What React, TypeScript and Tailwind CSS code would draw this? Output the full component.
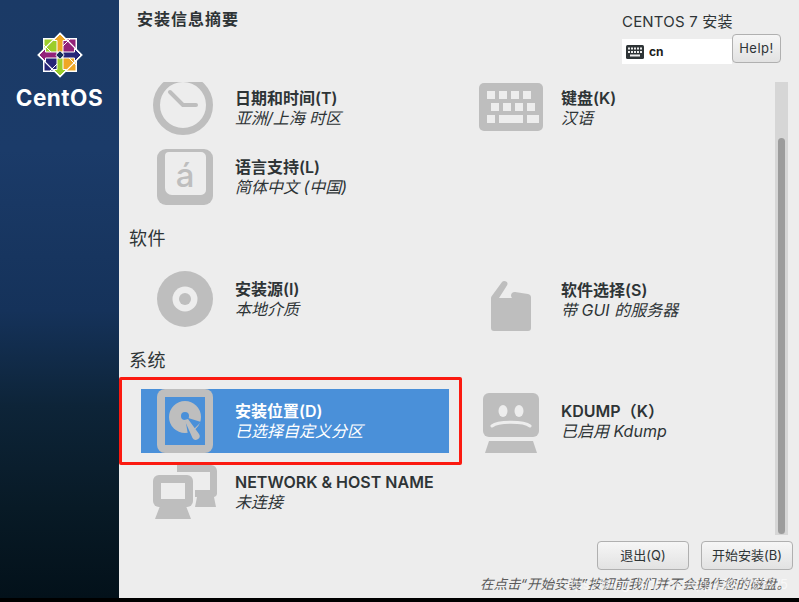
import React from "react";

const G = "#bebebe";

function Logo() {
  return (
    <svg width="46" height="46" viewBox="0 0 46 46">
      <rect x="6" y="6" width="34" height="34" fill="#fff" />
      <rect x="7.500" y="7.500" width="13" height="13" fill="#9ccd2a" />
      <rect x="25.500" y="7.500" width="13" height="13" fill="#932279" />
      <rect x="25.500" y="25.500" width="13" height="13" fill="#efa724" />
      <rect x="7.500" y="25.500" width="13" height="13" fill="#262577" />
      <path d="M23 1L45 23 23 45 1 23z" fill="none" stroke="#fff" strokeWidth="1.200" />
      <path d="M7 13l13 13M33 7L20 20M39 33L26 20M13 39l13-13" stroke="#fff" strokeWidth="1" fill="none" />
      <g stroke="#fff" strokeWidth="1">
        <path d="M23 2l6.500 6.500H26V20h-6V8.500h-3.500z" fill="#efa724" />
        <path d="M44 23l-6.500 6.500V26H26v-6h11.500v-3.500z" fill="#262577" />
        <path d="M23 44l-6.500-6.500H20V26h6v11.500h3.500z" fill="#9ccd2a" />
        <path d="M2 23l6.500-6.500V20H20v6H8.500v3.500z" fill="#932279" />
      </g>
      <rect x="20" y="20" width="6" height="6" transform="rotate(45 23 23)" fill="#16305a" stroke="#fff" strokeWidth="0.800" />
    </svg>
  );
}

function Clock() {
  return (
    <svg width="60" height="60" viewBox="0 0 60 60">
      <circle cx="30" cy="30" r="26.500" fill="none" stroke={G} strokeWidth="7" />
      <path d="M17 17l13 13h13" fill="none" stroke={G} strokeWidth="4" strokeLinecap="round" strokeLinejoin="round" />
    </svg>
  );
}

function Keyboard() {
  const keys = [
    [8, 8, 8], [20, 8, 8], [32, 8, 8], [44, 8, 8],
    [12, 20, 8], [24, 20, 8], [36, 20, 8], [48, 20, 8],
    [8, 32, 8], [20, 32, 24], [48, 32, 12],
  ];
  return (
    <svg width="64" height="48" viewBox="0 0 64 48">
      <rect width="64" height="48" rx="5" fill={G} />
      {keys.map(([x, y, w]) => (
        <rect key={`${x}-${y}`} x={x} y={y} width={w} height="8" fill="#ededed" />
      ))}
    </svg>
  );
}

function Lang() {
  return (
    <svg width="56" height="56" viewBox="0 0 56 56">
      <rect width="56" height="56" rx="9" fill={G} />
      <path d="M12 3h32a5 5 0 0 1 5 5v33a5 5 0 0 1-5 5H15a7 7 0 0 1-7-7V7a4 4 0 0 1 4-4z" fill="#ededed" />
      <text x="28" y="38" textAnchor="middle" fontSize="33" fontWeight="500" fontFamily="Inter" fill={G}>á</text>
    </svg>
  );
}

function Disc() {
  return (
    <svg width="56" height="56" viewBox="0 0 56 56">
      <circle cx="28" cy="28" r="28" fill={G} />
      <circle cx="28" cy="28" r="12.500" fill="#ededed" />
      <circle cx="28" cy="28" r="6" fill={G} />
    </svg>
  );
}

function Box() {
  return (
    <svg width="40" height="52" viewBox="0 0 40 52">
      <path d="M0 19a3 3 0 0 1 .8-2L11 3c1.500-2 6-.8 5.500 2 0 1-1 2-1.500 3L8 19h13c-2-2-1-6 3-6l13 2c2 .4 3 1.500 3 3.500V49a3 3 0 0 1-3 3H3a3 3 0 0 1-3-3z" fill={G} />
    </svg>
  );
}

function Hdd() {
  const inner = "#4a90d9";
  return (
    <svg width="56" height="64" viewBox="0 0 56 64">
      <rect width="56" height="64" rx="8" fill={G} />
      <rect x="8" y="8" width="40" height="48" fill={inner} />
      <circle cx="28" cy="28" r="16" fill={G} />
      <path d="M28 28L44 33L31 46z" fill={inner} />
      <circle cx="28" cy="27" r="4" fill={inner} />
      <path d="M27.500 31l3.500-1 11 15a3.500 3.500 0 0 1-6.500 4z" fill={G} />
    </svg>
  );
}

function Net() {
  return (
    <svg width="64" height="54" viewBox="0 0 64 54">
      <path d="M24 0h34a6 6 0 0 1 6 6v22a4 4 0 0 1-3 4l2 10H42l2-10h-2v-7h15V7H24z" fill={G} />
      <rect x="0" y="10" width="40" height="32" rx="6" fill={G} />
      <rect x="8" y="18" width="24" height="16" fill="#ededed" />
      <path d="M7 41h26l5 13H2z" fill={G} />
    </svg>
  );
}

function Dump() {
  return (
    <svg width="56" height="60" viewBox="0 0 56 60">
      <rect width="56" height="44" rx="6" fill={G} />
      <ellipse cx="20" cy="18" rx="4.500" ry="6" fill="#ededed" />
      <ellipse cx="36" cy="18" rx="4.500" ry="6" fill="#ededed" />
      <path d="M9 33c6-5 32-5 38 0" fill="none" stroke="#ededed" strokeWidth="3" strokeLinecap="round" />
      <path d="M6 48h44l4 12H2z" fill={G} />
    </svg>
  );
}

function Spoke({
  icon,
  title,
  sub,
  sel,
  left,
  height,
  textClass = "",
}: {
  icon: React.ReactNode;
  title: string;
  sub: string;
  sel?: boolean;
  left: string;
  height: string;
  textClass?: string;
}) {
  return (
    <div className={`flex items-center ${height} ${sel ? "bg-[#4a90d9] text-white" : "text-[#2e3436]"}`}>
      <div className={`flex justify-center items-center shrink-0 ${left}`}>{icon}</div>
      <div className={`flex flex-col ${textClass}`}>
        <div className="text-[16px] leading-[20px] font-semibold whitespace-nowrap">{title}</div>
        <div className="text-[16px] leading-[20px] italic whitespace-nowrap">{sub}</div>
      </div>
    </div>
  );
}

export default function App() {
  return (
    <div
      className="relative w-[799px] h-[602px] flex flex-col overflow-hidden bg-black"
      style={{ fontFamily: "Inter, 'Noto Sans CJK SC', sans-serif" }}
    >
      <div className="flex h-[598px]">
        <aside className="w-[119px] shrink-0 flex flex-col items-center pt-[32px] bg-[linear-gradient(180deg,#1b3a66_0%,#1b3b69_25%,#15325a_52%,#0d2438_68%,#081a26_85%,#03111a_100%)]">
          <Logo />
          <div className="mt-[7px] text-white text-[22.500px] leading-[26px] font-bold tracking-[0.5px]">CentOS</div>
        </aside>

        <main className="flex-1 flex flex-col bg-[#ededed]">
          <header className="h-[82px] shrink-0 flex justify-between pl-[18px] pr-[18px]">
            <h1 className="pt-[9px] text-[16px] leading-[20px] font-semibold text-[#2e3436] tracking-[1px]">安装信息摘要</h1>
            <div className="flex flex-col w-[159px] pt-[12px]">
              <div className="text-[15px] leading-[20px] tracking-[0.2px] text-[#2e3436] whitespace-nowrap">CENTOS 7 安装</div>
              <div className="flex items-start">
                <div className="mt-[7px] w-[110px] h-[25px] bg-white flex items-center gap-[5px] pl-[4px]">
                  <svg width="18" height="14" viewBox="0 0 18 14">
                    <rect width="18" height="14" rx="1.500" fill="#2e3436" />
                    {[0, 1, 2, 3, 4].map((i) => (
                      <rect key={i} x={2 + i * 3} y="2.500" width="2" height="2" fill="#ededed" />
                    ))}
                    {[0, 1, 2, 3, 4].map((i) => (
                      <rect key={i} x={2 + i * 3} y="6" width="2" height="2" fill="#ededed" />
                    ))}
                    <rect x="4" y="9.500" width="10" height="2" fill="#ededed" />
                  </svg>
                  <span className="text-[12px] font-bold text-[#1c1c1c]">cn</span>
                </div>
                <button className="mt-[2px] w-[49px] h-[29px] rounded-[4px] border border-[#b0b0b0] bg-[linear-gradient(180deg,#f6f6f6,#e2e2e2)] text-[13px] text-[#2e3436] tracking-[0.5px]">
                  Help!
                </button>
              </div>
            </div>
          </header>

          <div className="flex h-[453px] pl-[10px] pr-[11px]">
            <div className="flex-1 overflow-hidden">
              <div className="-mt-[7px] grid grid-cols-[320px_1fr]">
                <div className="pl-[12px]">
                  <Spoke icon={<Clock />} title="日期和时间(T)" sub="亚洲/上海 时区" left="w-[94px] pr-[10px]" height="h-[60px]" textClass="pt-[5px]" />
                </div>
                <div className="pl-[30px] pt-[8px] h-[60px]">
                  <Spoke icon={<Keyboard />} title="键盘(K)" sub="汉语" left="w-[82px] justify-start" height="h-[48px]" textClass="pt-[2px]" />
                </div>
                <div className="col-span-2 pl-[12px] mt-[14px]">
                  <Spoke icon={<Lang />} title="语言支持(L)" sub="简体中文 (中国)" left="w-[94px] pr-[6px]" height="h-[56px]" />
                </div>

                <div className="col-span-2 mt-[20px] h-[28px] text-[18px] leading-[28px] tracking-[0.5px] text-[#2e3436]">软件</div>

                <div className="pl-[12px] mt-[18px]">
                  <Spoke icon={<Disc />} title="安装源(I)" sub="本地介质" left="w-[94px] pr-[6px]" height="h-[56px]" />
                </div>
                <div className="pl-[30px] mt-[18px] h-[60px]">
                  <Spoke icon={<Box />} title="软件选择(S)" sub="带 GUI 的服务器" left="w-[82px] pl-[12px] pt-[8px] justify-start" height="h-[60px]" textClass="pb-[3px]" />
                </div>

                <div className="col-span-2 mt-[16px] h-[28px] text-[18px] leading-[28px] tracking-[0.5px] text-[#2e3436]">系统</div>

                <div className="pl-[12px] mt-[14px]">
                  <Spoke sel icon={<Hdd />} title="安装位置(D)" sub="已选择自定义分区" left="w-[94px] pr-[6px]" height="h-[64px]" />
                </div>
                <div className="pl-[30px] mt-[14px] h-[64px]">
                  <Spoke icon={<Dump />} title="KDUMP（K）" sub="已启用 Kdump" left="w-[82px] pl-[4px] pt-[4px] justify-start" height="h-[64px]" />
                </div>
                <div className="col-span-2 pl-[12px] mt-[11px]">
                  <Spoke icon={<Net />} title="NETWORK & HOST NAME" sub="未连接" left="w-[94px] pr-[6px]" height="h-[56px]" />
                </div>
              </div>
            </div>
            <div className="w-[13px] shrink-0 bg-[#d6d6d6] pt-[56px] flex justify-center">
              <div className="w-[7px] h-[396px] rounded-full bg-[#9c9c9c]" />
            </div>
          </div>

          <div className="flex justify-end gap-[12px] pr-[6px] pt-[6px]">
            <button className="w-[92px] h-[29px] rounded-[4px] border border-[#b0b0b0] bg-[linear-gradient(180deg,#f6f6f6,#e2e2e2)] text-[13px] text-[#2e3436]">退出(Q)</button>
            <button className="w-[92px] h-[29px] rounded-[4px] border border-[#b0b0b0] bg-[linear-gradient(180deg,#f6f6f6,#e2e2e2)] text-[13px] text-[#2e3436]">开始安装(B)</button>
          </div>
          <div className="relative mt-[5px] h-[18px] pr-[9px] text-right text-[13.500px] leading-[18px] italic text-[#5a5a5a] whitespace-nowrap">
            在点击“开始安装”按钮前我们并不会操作您的磁盘。
            <span className="absolute right-[11px] top-0 not-italic text-[13px] text-white/60">https://blog.csdn.net/qq_43279637/5</span>
          </div>
        </main>
      </div>
      <div className="absolute left-[119px] top-[377px] w-[343px] h-[88px] rounded-[2px] border-[3px] border-[#fb1a10] pointer-events-none" />
    </div>
  );
}
